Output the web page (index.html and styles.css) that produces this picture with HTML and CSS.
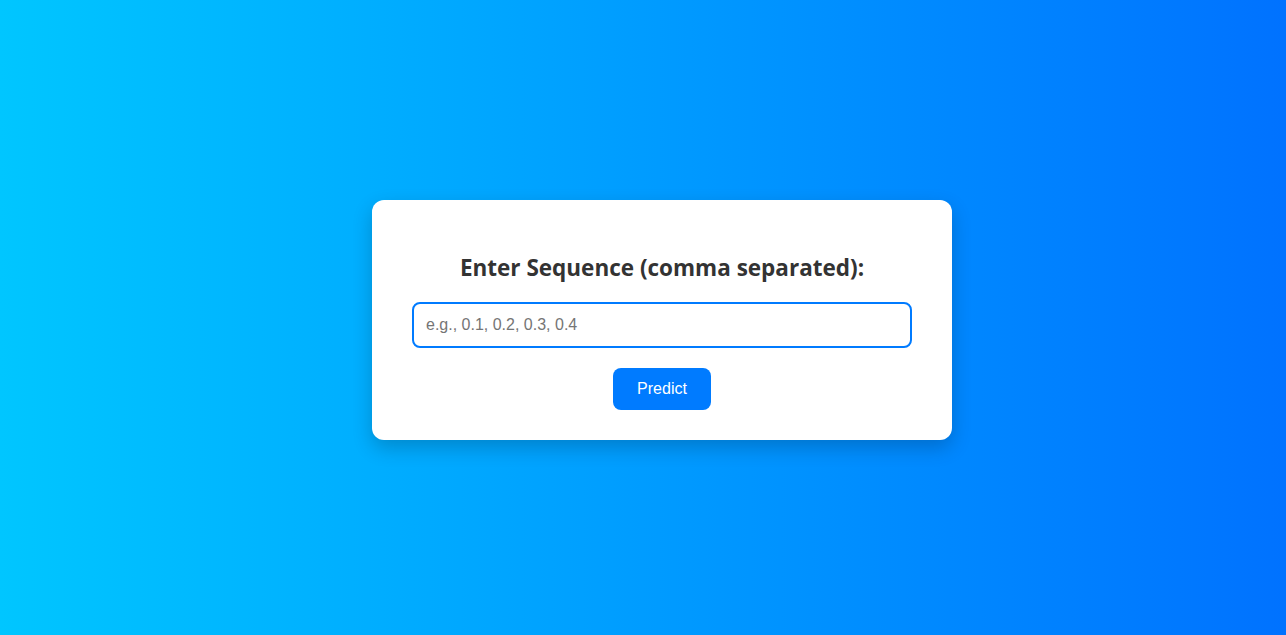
FILE: index.html
```html
<!DOCTYPE html>
<html>
<head>
<meta charset="utf-8">
<link rel="stylesheet" href="styles.css">
</head>
<body>
<main class="card">
  <h2 class="title">Enter Sequence (comma separated):</h2>
  <input class="seq-input" type="text" placeholder="e.g., 0.1, 0.2, 0.3, 0.4">
  <button class="predict-btn">Predict</button>
</main>
</body>
</html>
```

FILE: styles.css
```css
html, body {
  margin: 0;
  height: 100%;
}
body {
  background: linear-gradient(to right, #00c6ff, #0072ff);
  display: flex;
  justify-content: center;
  align-items: center;
  padding: 5px 0 0 38px;
  box-sizing: border-box;
  font-family: "Liberation Sans", Arial, sans-serif;
}
.card {
  width: 580px;
  box-sizing: border-box;
  background: #fff;
  border-radius: 12px;
  padding: 52px 40px 30px;
  box-shadow: 0 8px 20px rgba(0, 0, 0, 0.2);
  display: flex;
  flex-direction: column;
  align-items: center;
}
.title {
  margin: 0 0 18px;
  font-family: "Open Sans", "Noto Sans", sans-serif;
  font-weight: 700;
  font-size: 22.5px;
  line-height: 32px;
  color: #333;
}
.seq-input {
  width: 100%;
  box-sizing: border-box;
  height: 46px;
  border: 2px solid #007bff;
  border-radius: 8px;
  padding: 0 12px;
  font-family: "Liberation Sans", Arial, sans-serif;
  font-size: 16px;
  color: #333;
  outline: none;
}
.seq-input::placeholder {
  color: #757575;
}
.predict-btn {
  margin-top: 20px;
  width: 98px;
  height: 42px;
  border: none;
  border-radius: 8px;
  background: #007bff;
  color: #fff;
  font-family: "Liberation Sans", Arial, sans-serif;
  font-size: 16px;
  cursor: pointer;
}
```
